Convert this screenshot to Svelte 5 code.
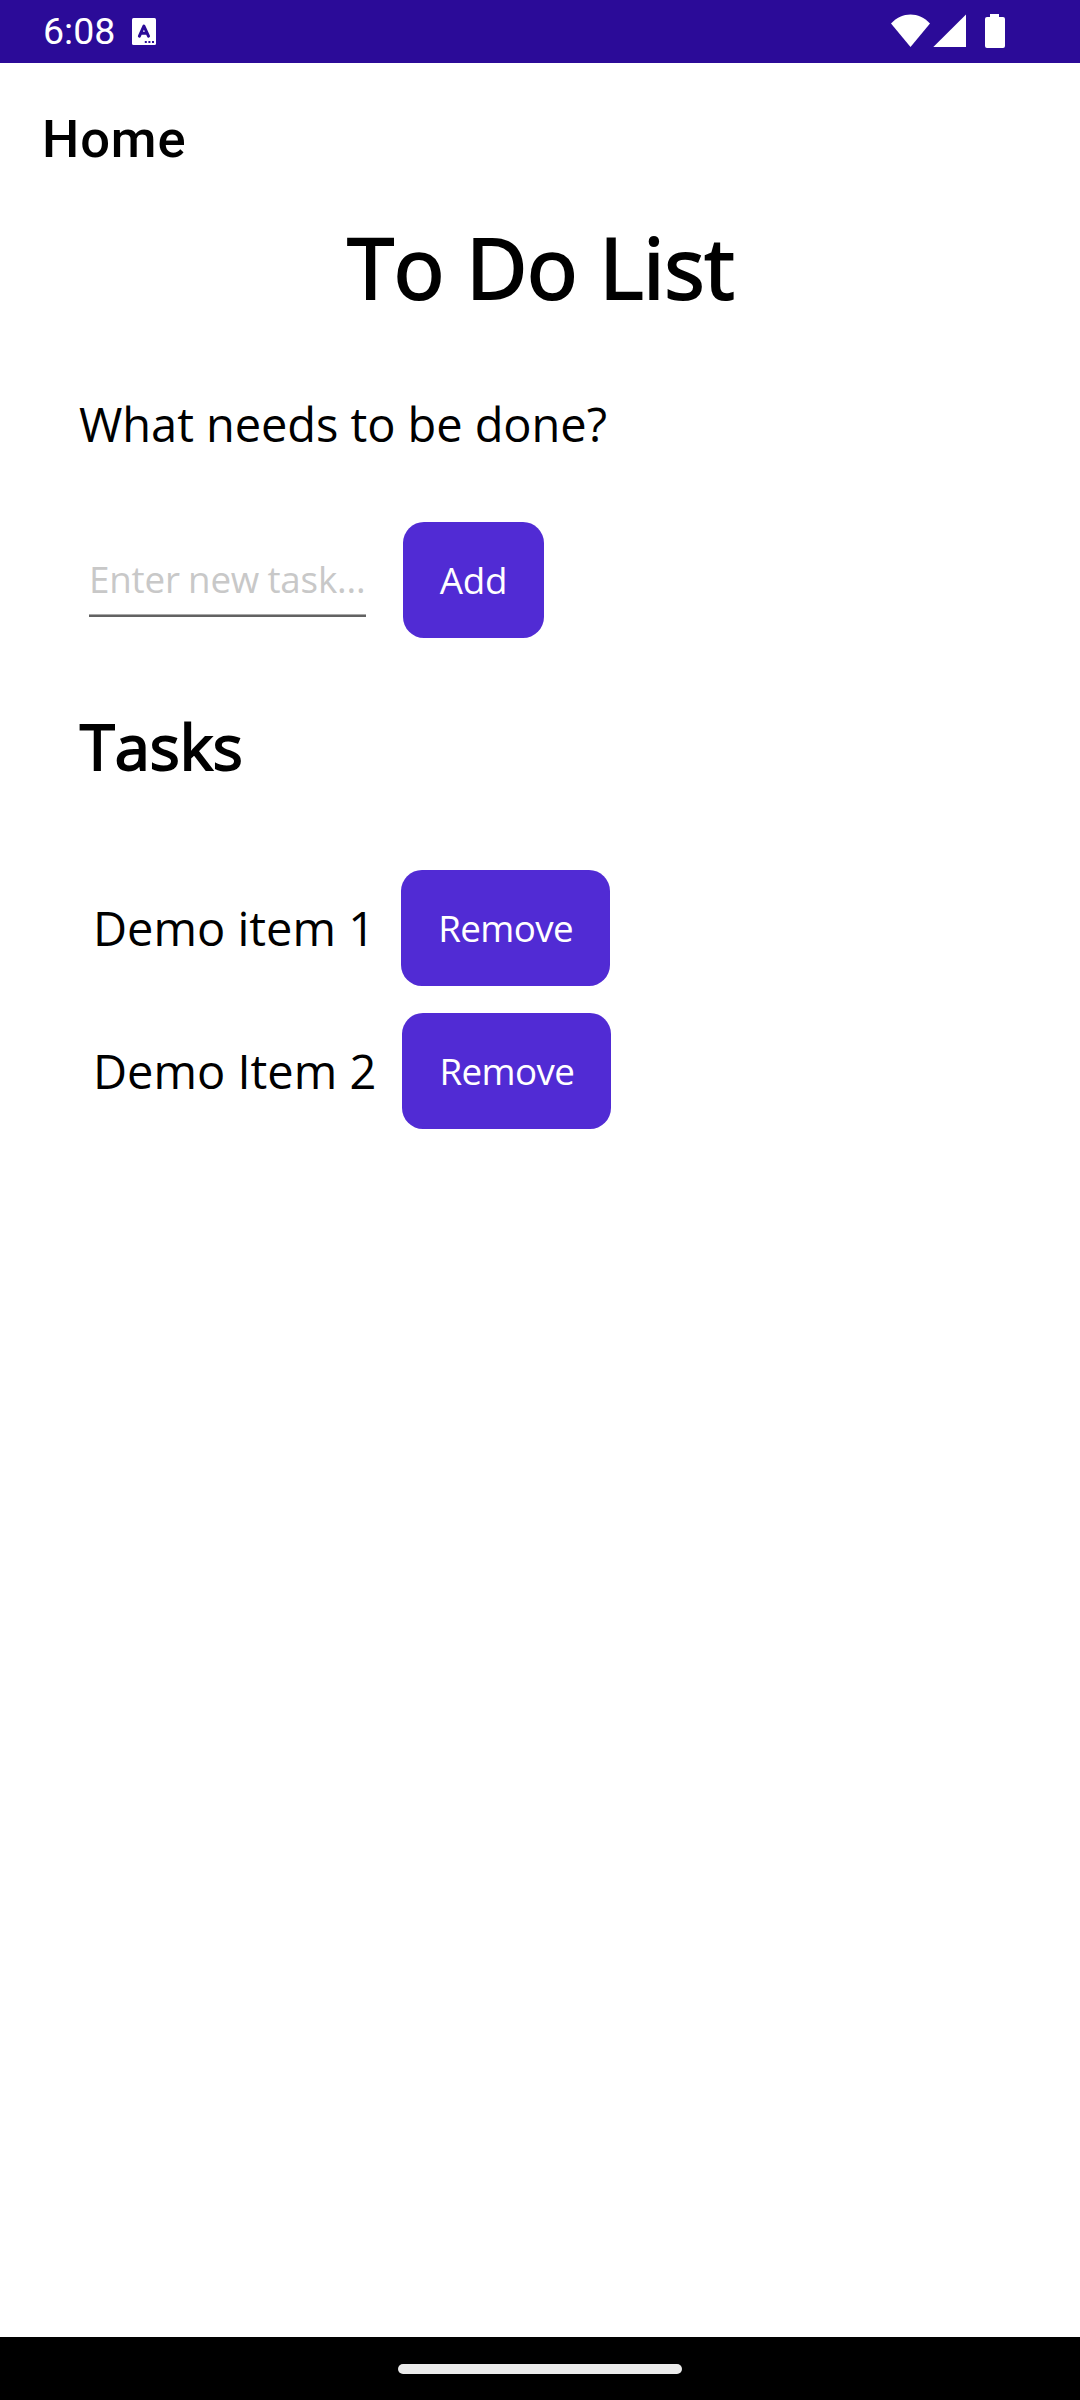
<script>
  let draft = $state('');
  let tasks = $state(['Demo item 1', 'Demo Item 2']);

  function add() {
    if (draft.trim()) {
      tasks.push(draft.trim());
      draft = '';
    }
  }
</script>

<div class="screen">
  <header class="status">
    <div class="left">
      <span class="clock">6:08</span>
      <svg class="keyboard" width="24" height="27" viewBox="0 0 24 27">
        <rect width="24" height="27" rx="1.5" fill="#fff" />
        <path d="M7.4 18.2 11.9 8 16.5 18.2M8.8 15.2h6.2" fill="none" stroke="#2b0b98" stroke-width="3" stroke-linecap="round" stroke-linejoin="round" />
        <path d="M12.8 23h2v2h-2zM16.4 23h2v2h-2zM20 23h2v2h-2z" fill="#2b0b98" />
      </svg>
    </div>
    <svg class="signals" width="116" height="36" viewBox="0 0 116 36" fill="#fff">
      <path d="M0 9.5C11-2.6 28-2.6 39 9.5L19.5 33Z" />
      <path d="M75 .5V33H42.3Z" />
      <path d="M99 0h9v3h4q2 0 2 2v27q0 2-2 2H96q-2 0-2-2V5q0-2 2-2h3z" />
    </svg>
  </header>

  <nav class="toolbar">Home</nav>

  <main>
    <h1>To Do List</h1>
    <p class="question">What needs to be done?</p>
    <div class="entry">
      <input placeholder="Enter new task..." bind:value={draft} />
      <button onclick={add}>Add</button>
    </div>
    <h2>Tasks</h2>
    <ul>
      {#each tasks as task, i}
        <li>
          <span>{task}</span>
          <button class="remove" onclick={() => tasks.splice(i, 1)}>Remove</button>
        </li>
      {/each}
    </ul>
  </main>

  <footer><div class="pill"></div></footer>
</div>

<style>
  :global(body) { background: #fff; }
  .screen {
    width: 1080px;
    height: 2400px;
    display: flex;
    flex-direction: column;
    font-family: "Open Sans", sans-serif;
    color: #000;
    background: #fff;
  }
  .status {
    height: 63px;
    box-sizing: border-box;
    padding: 0 73px 0 43px;
    display: flex;
    justify-content: space-between;
    background: #2b0b98;
  }
  .left { display: flex; gap: 17px; }
  .clock { font: 37.5px/63px Roboto, sans-serif; color: #fff; }
  .keyboard { margin-top: 18px; }
  .signals { margin-top: 14px; }
  .toolbar {
    height: 145px;
    padding-left: 42px;
    font: 500 52.5px/152px Roboto, sans-serif;
    letter-spacing: 0.9px;
  }
  main { flex: 1; padding: 0 79px; }
  h1, h2, p, ul { margin: 0; padding: 0; font-weight: 400; }
  h1 {
    height: 115px;
    padding-left: 2px;
    line-height: 117px;
    font-size: 84px;
    text-align: center;
    -webkit-text-stroke: 2.2px #000;
  }
  .question {
    margin-top: 69px;
    font-size: 47px;
    line-height: 64px;
    letter-spacing: -0.07px;
  }
  .entry { display: flex; align-items: center; margin-top: 66px; gap: 37px; }
  input {
    width: 277px;
    height: 74px;
    margin: 0 0 0 10px;
    padding: 0 0 1px;
    box-sizing: border-box;
    border: 0;
    border-bottom: 2px solid #626262;
    box-shadow: inset 0 -1px #a8a8a8;
    outline: 0;
    background: none;
    font: 36.75px "Open Sans", sans-serif;
    letter-spacing: -0.2px;
    word-spacing: -1px;
  }
  input::placeholder { color: #c8c8c8; }
  button {
    width: 141px;
    height: 116px;
    padding: 0;
    border: 0;
    border-radius: 21px;
    background: #512bd4;
    color: #fff;
    font: 36.75px "Open Sans", sans-serif;
    letter-spacing: -0.2px;
  }
  h2 {
    margin-top: 65px;
    padding-left: 1px;
    font-size: 63px;
    line-height: 86px;
    -webkit-text-stroke: 1.9px #000;
  }
  ul { margin-top: 81px; display: flex; flex-direction: column; gap: 27px; }
  li { display: flex; align-items: center; gap: 26px; padding-left: 14px; font-size: 47px; }
  .remove { width: 209px; letter-spacing: -0.6px; }
  footer {
    height: 63px;
    display: flex;
    justify-content: center;
    align-items: center;
    background: #000;
  }
  .pill { width: 284px; height: 10px; border-radius: 5px; background: #ebebeb; }
</style>
